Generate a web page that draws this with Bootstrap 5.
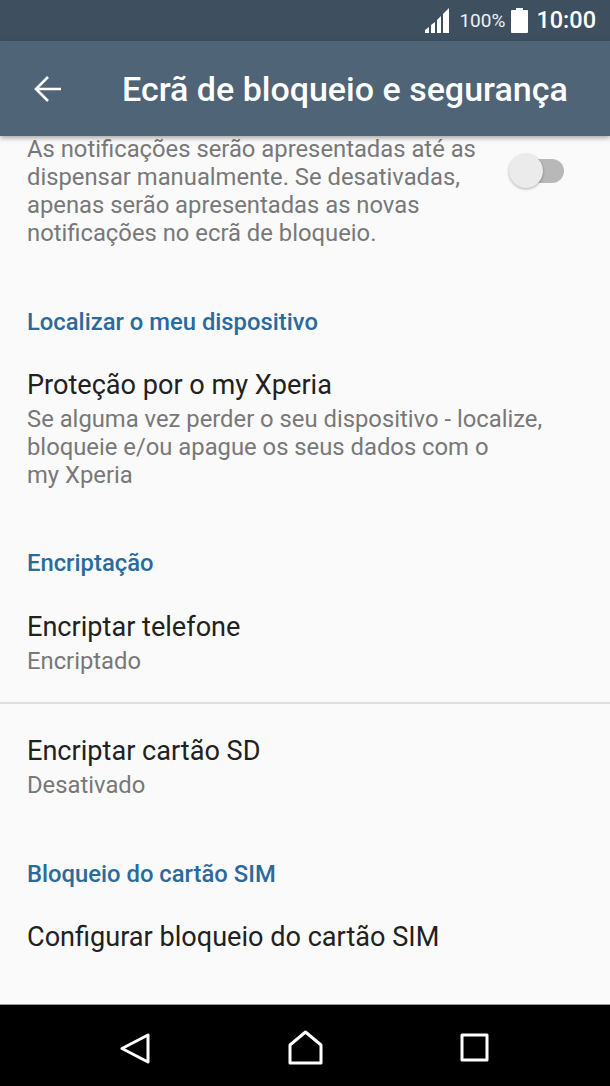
<!DOCTYPE html>
<html lang="pt">
<head>
  <meta charset="UTF-8">
  <title>Ecrã de bloqueio e segurança</title>
  <link href="https://cdn.jsdelivr.net/npm/bootstrap@5.3.3/dist/css/bootstrap.min.css" rel="stylesheet">
  <style>
    html, body { height: 100%; }
    body { font-family: Roboto, "Liberation Sans", sans-serif; background: #fafafa; overflow: hidden; }
    .phone { width: 610px; height: 1086px; }
    .status-bar { height: 41px; background: #3e5060; color: #fff; padding-right: 14px; }
    .status-pct { font-size: 19px; margin: 0 6px 0 9px; line-height: 1; color: #eef1f3; }
    .status-time { font-size: 23.5px; font-weight: 500; margin-left: 8px; line-height: 1; }
    .app-bar { height: 95px; background: #506477; color: #fff; box-shadow: 0 2px 5px rgba(0,0,0,.35); z-index: 2; position: relative; padding-left: 34px; }
    .app-title { font-size: 34px; font-weight: 500; margin: 0 0 0 60px; line-height: 1; }
    .content { height: 868px; overflow: hidden; }
    .sub { font-size: 23.8px; line-height: 28px; color: #787878; }
    .entry .sub { margin-top: 3px; }
    .notif { padding: 0 27px; height: 112px; margin-top: -1px; }
    .switcher { width: 55px; height: 34px; position: relative; margin: 19px 19px 0 0; flex: none; }
    .switch-track { position: absolute; left: 14px; top: 5px; width: 41px; height: 24px; border-radius: 12px; background: #b8b8b8; }
    .switch-thumb { position: absolute; left: 0; top: 0; width: 34px; height: 34px; border-radius: 50%; background: #ebebeb; box-shadow: 0 1px 3px rgba(0,0,0,.3); }
    .section-head { font-size: 23.8px; font-weight: 500; color: #2a6a9c; padding: 0 27px; line-height: 28px; margin-top: 61px; }
    .section-mid { margin-top: 60px; }
    .entry { padding: 0 27px; margin-top: 32px; }
    .entry-title { font-size: 27.1px; line-height: 34px; color: #212121; }
    .entry-tall { margin-top: 33px; }
    .divider-line { height: 2px; background: #dfdfdf; margin-top: 27px; }
    .divider-line + .entry { margin-top: 30px; }
    .nav-bar { height: 82px; background: #000; border-top: 1px solid #9a9a9a; }
    .nav-icon { position: absolute; }
    .nav-back { left: 120px; top: 28px; }
    .nav-home { left: 288px; top: 25px; }
    .nav-recent { left: 460px; top: 28px; }
  </style>
</head>
<body>
  <div class="phone d-flex flex-column">
    <div class="status-bar d-flex align-items-center justify-content-end flex-shrink-0">
      <svg width="25" height="25" viewBox="0 0 25 25"><g fill="#fff"><path d="M0 25v-3l4-3v6z"/><path d="M6 25v-8l4-3v11z"/><path d="M12 25V12l4-4v17z"/><path d="M18 25V6l6-6v25z"/></g></svg>
      <span class="status-pct">100%</span>
      <svg width="17" height="25" viewBox="0 0 17 25"><path fill="#fff" d="M5 0h7v2h4a1 1 0 0 1 1 1v21a1 1 0 0 1-1 1H1a1 1 0 0 1-1-1V3a1 1 0 0 1 1-1h4z"/></svg>
      <span class="status-time">10:00</span>
    </div>
    <div class="app-bar d-flex align-items-center flex-shrink-0">
      <svg width="28" height="28" viewBox="0 0 28 28" fill="none" stroke="#fff" stroke-width="2.6"><path d="M27 14H2M14 2 2 14l12 12"/></svg>
      <h1 class="app-title">Ecrã de bloqueio e segurança</h1>
    </div>
    <div class="content flex-shrink-0">
      <div class="notif d-flex justify-content-between align-items-start">
        <div class="sub">As notificações serão apresentadas até as<br>dispensar manualmente. Se desativadas,<br>apenas serão apresentadas as novas<br>notificações no ecrã de bloqueio.</div>
        <div class="switcher"><div class="switch-track"></div><div class="switch-thumb"></div></div>
      </div>
      <div class="section-head">Localizar o meu dispositivo</div>
      <div class="entry">
        <div class="entry-title">Proteção por o my Xperia</div>
        <div class="sub">Se alguma vez perder o seu dispositivo - localize,<br>bloqueie e/ou apague os seus dados com o<br>my Xperia</div>
      </div>
      <div class="section-head section-mid">Encriptação</div>
      <div class="entry entry-tall">
        <div class="entry-title">Encriptar telefone</div>
        <div class="sub">Encriptado</div>
      </div>
      <div class="divider-line"></div>
      <div class="entry">
        <div class="entry-title">Encriptar cartão SD</div>
        <div class="sub">Desativado</div>
      </div>
      <div class="section-head">Bloqueio do cartão SIM</div>
      <div class="entry">
        <div class="entry-title">Configurar bloqueio do cartão SIM</div>
      </div>
    </div>
    <div class="nav-bar d-flex flex-shrink-0 position-relative">
      <svg class="nav-icon nav-back" width="30" height="32" viewBox="0 0 30 32" fill="none" stroke="#fff" stroke-width="3" stroke-linejoin="round"><path d="M28 2v27L2 15.500z"/></svg>
      <svg class="nav-icon nav-home" width="35" height="35" viewBox="0 0 35 35" fill="none" stroke="#fff" stroke-width="3" stroke-linejoin="round"><path d="M2 33V15L17.500 2 33 15v18z"/></svg>
      <svg class="nav-icon nav-recent" width="30" height="30" viewBox="0 0 30 30" fill="none" stroke="#fff" stroke-width="3" stroke-linejoin="round"><path d="M2 2h25v25H2z"/></svg>
    </div>
  </div>
  <script src="https://cdn.jsdelivr.net/npm/bootstrap@5.3.3/dist/js/bootstrap.bundle.min.js"></script>
</body>
</html>
